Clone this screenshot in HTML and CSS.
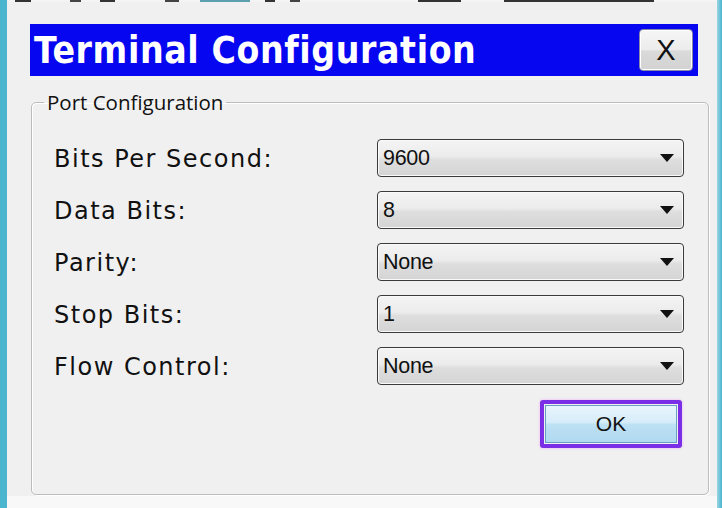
FILE: index.html
```html
<!DOCTYPE html>
<html>
<head>
<meta charset="utf-8">
<link rel="stylesheet" href="styles.css">
</head>
<body>
<div class="screen">
  <div class="edge"></div>
  <div class="window">
    <div class="topstrip"></div>
    <div class="dialog">
      <div class="titlebar">
        <span class="title">Terminal Configuration</span>
        <div class="close">X</div>
      </div>
      <fieldset class="group">
        <legend class="legend">Port Configuration</legend>
        <div class="rows">
          <div class="row"><span class="label">Bits Per Second:</span><div class="combo"><span class="value">9600</span><svg class="arrow" width="14" height="8" viewBox="0 0 14 8"><path d="M0 0H14L7 8Z" fill="#111"/></svg></div></div>
          <div class="row"><span class="label">Data Bits:</span><div class="combo"><span class="value">8</span><svg class="arrow" width="14" height="8" viewBox="0 0 14 8"><path d="M0 0H14L7 8Z" fill="#111"/></svg></div></div>
          <div class="row"><span class="label">Parity:</span><div class="combo"><span class="value">None</span><svg class="arrow" width="14" height="8" viewBox="0 0 14 8"><path d="M0 0H14L7 8Z" fill="#111"/></svg></div></div>
          <div class="row"><span class="label">Stop Bits:</span><div class="combo"><span class="value">1</span><svg class="arrow" width="14" height="8" viewBox="0 0 14 8"><path d="M0 0H14L7 8Z" fill="#111"/></svg></div></div>
          <div class="row"><span class="label">Flow Control:</span><div class="combo"><span class="value">None</span><svg class="arrow" width="14" height="8" viewBox="0 0 14 8"><path d="M0 0H14L7 8Z" fill="#111"/></svg></div></div>
        </div>
        <div class="actions">
          <div class="highlight"><div class="ok">OK</div></div>
        </div>
      </fieldset>
    </div>
  </div>
  <div class="edge edge-right"></div>
</div>
</body>
</html>
```
FILE: styles.css
```css
html, body {
  margin: 0;
  padding: 0;
  width: 722px;
  height: 508px;
  overflow: hidden;
  background: #4cb6d0;
}
.screen {
  display: flex;
  width: 722px;
  height: 508px;
}
.edge {
  width: 7px;
  flex: none;
  background: #4ab5cf;
}
.edge-right {
  width: 5px;
  background: linear-gradient(to right, #9ad6e4, #4ab5cf);
}
.window {
  width: 710px;
  flex: none;
  display: flex;
  flex-direction: column;
  background: #f0f0f0;
}
.topstrip {
  height: 2px;
  flex: none;
  background:
    linear-gradient(to right,
      #f4f4f4 0, #f4f4f4 8px, #333 8px, #333 24px, #f4f4f4 24px,
      #f4f4f4 63px, #444 63px, #444 74px, #f4f4f4 74px,
      #f4f4f4 93px, #333 93px, #333 108px, #f4f4f4 108px,
      #f4f4f4 158px, #444 158px, #444 172px, #f4f4f4 172px,
      #f4f4f4 193px, #5d9faf 193px, #5d9faf 243px, #f4f4f4 243px,
      #f4f4f4 258px, #333 258px, #333 268px, #f4f4f4 268px,
      #f4f4f4 283px, #444 283px, #444 293px, #f4f4f4 293px,
      #f4f4f4 411px, #333 411px, #333 454px, #f4f4f4 454px,
      #f4f4f4 497px, #333 497px, #333 647px, #f4f4f4 647px);
}
.dialog {
  flex: 1;
  display: flex;
  flex-direction: column;
  align-items: flex-start;
  padding: 22px 0 0 23px;
  background: linear-gradient(to bottom, #f0f0f0 0, #f0f0f0 494px, #f8f8f8 494px);
}
.titlebar {
  width: 668px;
  height: 52px;
  box-sizing: border-box;
  background: #0606f0;
  display: flex;
  align-items: center;
  justify-content: space-between;
  padding: 0 5px 0 4px;
}
.title {
  font-family: "DejaVu Sans Condensed", "DejaVu Sans", sans-serif;
  font-weight: bold;
  font-size: 37px;
  letter-spacing: 0.6px;
  color: #ffffff;
  line-height: 40px;
  padding-top: 2px;
}
.close {
  width: 54px;
  height: 42px;
  box-sizing: border-box;
  border: 1px solid #8a8aa8;
  border-radius: 4px;
  background: linear-gradient(to bottom, #f6f6f6 0, #ececec 50%, #dadada 52%, #d2d2d2 100%);
  box-shadow: inset 0 0 0 1px #ffffff;
  font-family: "Liberation Sans", Arial, sans-serif;
  font-size: 29px;
  line-height: 40px;
  text-align: center;
  color: #111;
}
.group {
  margin: 14px 0 0 1px;
  width: 678px;
  height: 405px;
  box-sizing: border-box;
  border: 1px solid #bcbcbc;
  border-radius: 5px;
  box-shadow: 1px 1px 0 #ffffff, inset 1px 1px 0 #ffffff;
  padding: 25px 24px 0 22px;
  display: flex;
  flex-direction: column;
}
.legend {
  font-family: "Open Sans", "Liberation Sans", sans-serif;
  font-size: 20.5px;
  line-height: 24px;
  color: #111;
  padding: 0 3px;
  margin-left: -10px;
}
.rows {
  display: flex;
  flex-direction: column;
  gap: 14px;
}
.row {
  display: flex;
  align-items: center;
  justify-content: space-between;
  height: 38px;
}
.label {
  font-family: "DejaVu Sans", Verdana, sans-serif;
  font-size: 24px;
  letter-spacing: 1.5px;
  color: #111;
  line-height: 30px;
  padding-top: 2px;
}
.combo {
  width: 307px;
  height: 38px;
  box-sizing: border-box;
  border: 1.5px solid #3a3a3a;
  border-radius: 4px;
  background: linear-gradient(to bottom, #f4f4f4 0, #ececec 45%, #dedede 55%, #d4d4d4 100%);
  box-shadow: inset 0 0 0 1px #fafafa;
  display: flex;
  align-items: center;
  justify-content: space-between;
  padding: 0 9px 0 5px;
}
.value {
  font-family: "Liberation Sans", Arial, sans-serif;
  font-size: 21.5px;
  color: #111;
  letter-spacing: -0.3px;
}
.arrow {
  display: block;
}
.actions {
  display: flex;
  justify-content: flex-end;
  margin-top: 15px;
  padding-right: 2px;
}
.highlight {
  width: 142px;
  height: 48px;
  box-sizing: border-box;
  border: 4px solid #7a2fe6;
  border-radius: 3px;
  box-shadow: 0 0 3px #eab0f4;
  padding: 1px;
  background: #f0f0f0;
}
.ok {
  height: 100%;
  box-sizing: border-box;
  border: 1px solid #6a9fc4;
  background: linear-gradient(to bottom, #e8f5fc 0, #d6edf9 45%, #bde0f4 52%, #b0d9f0 100%);
  font-family: "Liberation Sans", Arial, sans-serif;
  font-size: 21px;
  line-height: 36px;
  text-align: center;
  color: #111;
}
```
